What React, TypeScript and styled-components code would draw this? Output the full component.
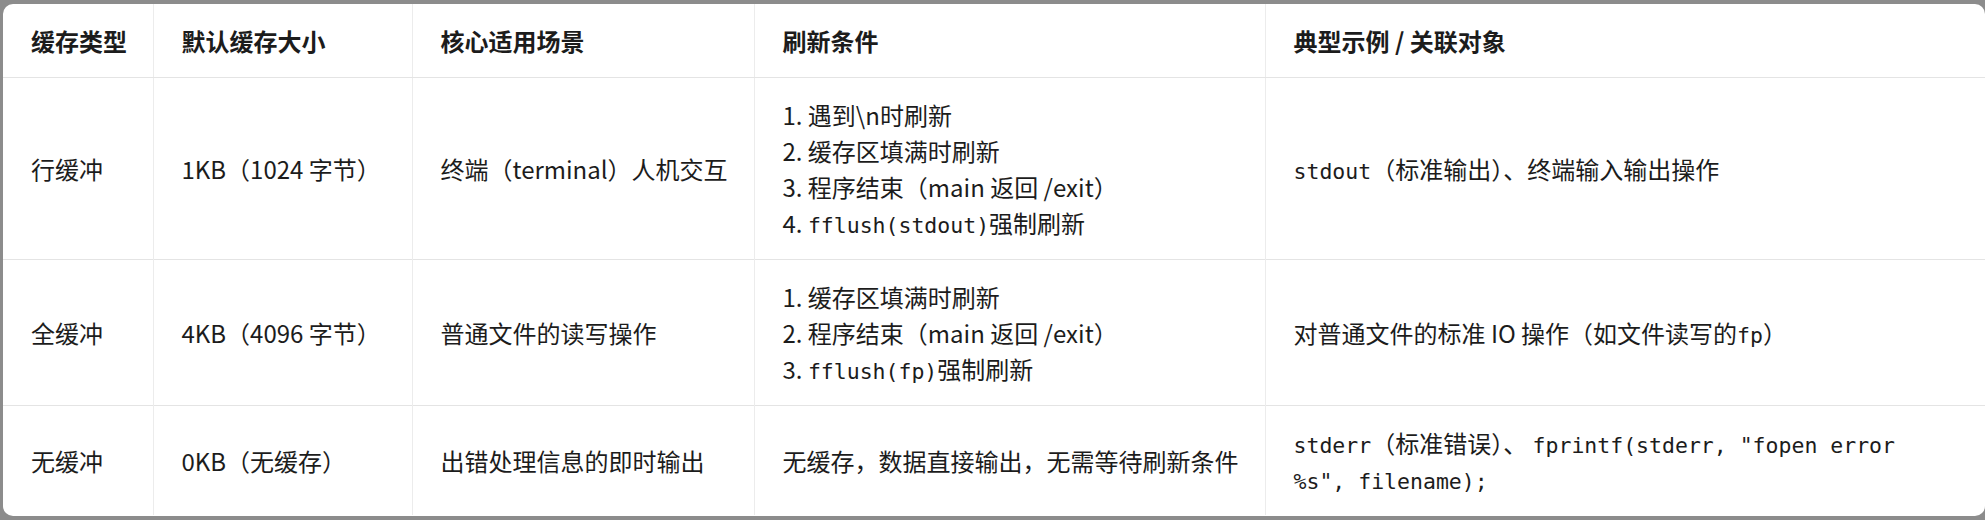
import React from 'react';
import styled, { createGlobalStyle } from 'styled-components';

const GlobalStyle = createGlobalStyle`
  html, body {
    margin: 0;
    padding: 0;
    background: #8c8c8c;
    overflow: hidden;
  }
`;

const Page = styled.div`
  width: 1985px;
  height: 520px;
  padding: 4px 0 0 3px;
  box-sizing: border-box;
`;

const Panel = styled.div`
  background: #ffffff;
  width: 1982px;
  height: 512px;
  border-radius: 10px;
  overflow: hidden;
`;

const Table = styled.table`
  width: 100%;
  border-collapse: collapse;
  table-layout: fixed;
  font-family: "Noto Sans CJK SC", "Noto Sans", sans-serif;
  font-size: 24px;
  line-height: 36px;
  color: #1c1c1c;
`;

const HeadCell = styled.th`
  text-align: left;
  font-weight: 700;
  padding: 19px 16px 18px 28px;
  white-space: nowrap;
  border-bottom: 1px solid #e4e4e4;
  border-left: 1px solid #ececec;
  &:first-child {
    border-left: none;
  }
`;

const Cell = styled.td`
  text-align: left;
  vertical-align: middle;
  font-weight: 400;
  padding: 19px 16px 18px 28px;
  border-top: 1px solid #e4e4e4;
  border-left: 1px solid #ececec;
  &:first-child {
    border-left: none;
  }
`;

const Code = styled.code`
  font-family: "DejaVu Sans Mono", "Liberation Mono", "Noto Sans CJK SC", monospace;
  font-size: 21.5px;
  line-height: 1;
`;

const Steps = styled.div`
  display: flex;
  flex-direction: column;
`;

const columns = [150, 259, 342, 511];

type Part = string | { code: string } | { br: true };

interface Row {
  type: string;
  size: string;
  scene: string;
  flush: Part[][];
  example: Part[];
}

const rows: Row[] = [
  {
    type: '行缓冲',
    size: '1KB（1024 字节）',
    scene: '终端（terminal）人机交互',
    flush: [
      ['1. 遇到\\n时刷新'],
      ['2. 缓存区填满时刷新'],
      ['3. 程序结束（main 返回 /exit）'],
      ['4. ', { code: 'fflush(stdout)' }, '强制刷新'],
    ],
    example: [{ code: 'stdout' }, '（标准输出）、终端输入输出操作'],
  },
  {
    type: '全缓冲',
    size: '4KB（4096 字节）',
    scene: '普通文件的读写操作',
    flush: [
      ['1. 缓存区填满时刷新'],
      ['2. 程序结束（main 返回 /exit）'],
      ['3. ', { code: 'fflush(fp)' }, '强制刷新'],
    ],
    example: ['对普通文件的标准 IO 操作（如文件读写的', { code: 'fp' }, '）'],
  },
  {
    type: '无缓冲',
    size: '0KB（无缓存）',
    scene: '出错处理信息的即时输出',
    flush: [['无缓存，数据直接输出，无需等待刷新条件']],
    example: [
      { code: 'stderr' },
      '（标准错误）、 ',
      { code: 'fprintf(stderr, "fopen error' },
      { br: true },
      { code: '%s", filename);' },
    ],
  },
];

const renderParts = (parts: Part[]) =>
  parts.map((p, i) => {
    if (typeof p === 'string') return <span key={i}>{p}</span>;
    if ('br' in p) return <br key={i} />;
    return <Code key={i}>{p.code}</Code>;
  });

export default function App() {
  return (
    <Page>
      <GlobalStyle />
      <Panel>
        <Table>
          <colgroup>
            {columns.map((w, i) => (
              <col key={i} style={{ width: w }} />
            ))}
            <col />
          </colgroup>
          <thead>
            <tr>
              <HeadCell>缓存类型</HeadCell>
              <HeadCell>默认缓存大小</HeadCell>
              <HeadCell>核心适用场景</HeadCell>
              <HeadCell>刷新条件</HeadCell>
              <HeadCell>典型示例 / 关联对象</HeadCell>
            </tr>
          </thead>
          <tbody>
            {rows.map((row) => (
              <tr key={row.type}>
                <Cell>{row.type}</Cell>
                <Cell>{row.size}</Cell>
                <Cell>{row.scene}</Cell>
                <Cell>
                  <Steps>
                    {row.flush.map((line, i) => (
                      <div key={i}>{renderParts(line)}</div>
                    ))}
                  </Steps>
                </Cell>
                <Cell>{renderParts(row.example)}</Cell>
              </tr>
            ))}
          </tbody>
        </Table>
      </Panel>
    </Page>
  );
}
